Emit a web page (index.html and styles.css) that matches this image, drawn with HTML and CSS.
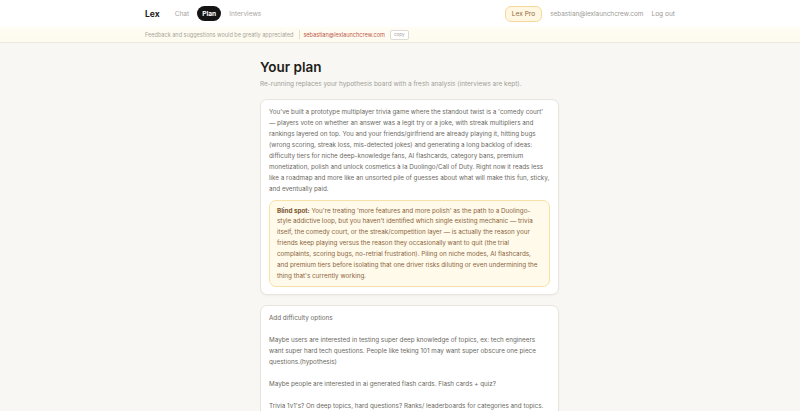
FILE: index.html
```html
<!DOCTYPE html>
<html>
<head>
<meta charset="utf-8">
<link rel="stylesheet" href="styles.css">
</head>
<body>
<header class="topbar">
  <div class="wrap topbar-inner">
    <nav class="nav">
      <span class="logo">Lex</span>
      <span class="nav-link">Chat</span>
      <span class="nav-link active">Plan</span>
      <span class="nav-link">Interviews</span>
    </nav>
    <div class="account">
      <span class="pro">Lex Pro</span>
      <span class="acct-email">sebastian@lexlaunchcrew.com</span>
      <span class="logout">Log out</span>
    </div>
  </div>
</header>
<div class="feedback">
  <div class="wrap feedback-inner">
    <span class="fb-text">Feedback and suggestions would be greatly appreciated</span>
    <span class="fb-sep"></span>
    <span class="fb-email">sebastian@lexlaunchcrew.com</span>
    <span class="fb-copy">copy</span>
  </div>
</div>
<main class="main">
  <div class="column">
    <h1 class="title">Your plan</h1>
    <p class="subtitle">Re-running replaces your hypothesis board with a fresh analysis (interviews are kept).</p>
    <section class="card">
      <p class="summary">You've built a prototype multiplayer trivia game where the standout twist is a 'comedy court' — players vote on whether an answer was a legit try or a joke, with streak multipliers and rankings layered on top. You and your friends/girlfriend are already playing it, hitting bugs (wrong scoring, streak loss, mis-detected jokes) and generating a long backlog of ideas: difficulty tiers for niche deep-knowledge fans, AI flashcards, category bans, premium monetization, polish and unlock cosmetics à la Duolingo/Call of Duty. Right now it reads less like a roadmap and more like an unsorted pile of guesses about what will make this fun, sticky, and eventually paid.</p>
      <div class="blind">
        <strong>Blind spot:</strong> You're treating 'more features and more polish' as the path to a Duolingo-style addictive loop, but you haven't identified which single existing mechanic — trivia itself, the comedy court, or the streak/competition layer — is actually the reason your friends keep playing versus the reason they occasionally want to quit (the trial complaints, scoring bugs, no-retrial frustration). Piling on niche modes, AI flashcards, and premium tiers before isolating that one driver risks diluting or even undermining the thing that's currently working.
      </div>
    </section>
    <section class="card notes">
      <p>Add difficulty options</p>
      <p>Maybe users are interested in testing super deep knowledge of topics, ex: tech engineers want super hard tech questions. People like teking 101 may want super obscure one piece questions.(hypothesis)</p>
      <p>Maybe people are interested in ai generated flash cards. Flash cards + quiz?</p>
      <p>Trivia 1v1's? On deep topics, hard questions? Ranks/ leaderboards for categories and topics.</p>
    </section>
  </div>
</main>
</body>
</html>
```
FILE: styles.css
```css
* { box-sizing: border-box; }
html, body { margin: 0; padding: 0; }
body {
  font-family: Inter, "Noto Sans", sans-serif;
  background: #f8f7f3;
  color: #3b3a37;
  height: 411px;
  overflow: hidden;
}
.wrap {
  width: 530px;
  margin: 0 auto;
  position: relative;
  left: 10px;
}
.topbar {
  background: #ffffff;
  height: 27px;
}
.topbar-inner {
  height: 27px;
  display: flex;
  align-items: center;
  justify-content: space-between;
}
.nav { display: flex; align-items: center; }
.logo {
  font-weight: 700;
  font-size: 8.5px;
  color: #1c1b19;
  margin-right: 15px;
}
.nav-link {
  font-size: 6.6px;
  color: #a9a6a0;
  margin-right: 8px;
}
.nav-link.active {
  background: #141414;
  color: #fff;
  font-weight: 700;
  border-radius: 8px;
  height: 15px;
  padding: 0 5px;
  display: inline-flex;
  align-items: center;
}
.account { display: flex; align-items: center; }
.pro {
  font-size: 6.6px;
  color: #8f6c40;
  background: #fff7e2;
  border: 1px solid #f5d99c;
  border-radius: 6px;
  height: 16px;
  padding: 0 6px;
  display: inline-flex;
  align-items: center;
  margin-right: 8px;
}
.acct-email { font-size: 6.4px; color: #9d9a94; margin-right: 8px; }
.logout { font-size: 6.6px; color: #9d9a94; margin-right: 0; }
.feedback {
  background: linear-gradient(#fffdf4, #fdfbee);
  border-bottom: 1px solid #ebe8df;
  height: 16px;
}
.feedback-inner {
  height: 15px;
  display: flex;
  align-items: center;
}
.fb-text { font-size: 5.55px; color: #a9a59c; }
.fb-sep {
  width: 1px;
  height: 9px;
  background: #e3dfd5;
  margin: 0 3px 0 6px;
}
.fb-email { font-size: 5.6px; color: #c0584b; margin-right: 5px; }
.fb-copy {
  font-size: 4.6px;
  color: #a8a5a0;
  border: 1px solid #dedbd5;
  background: #fff;
  border-radius: 2px;
  height: 10px;
  padding: 0 3px;
  display: inline-flex;
  align-items: center;
}
.main { padding-top: 16px; }
.column {
  width: 300px;
  margin: 0 auto;
  position: relative;
  left: 10px;
}
.title {
  margin: 0;
  font-size: 13.5px;
  font-weight: 600;
  color: #1d1c1a;
  line-height: 16px;
}
.subtitle {
  margin: 4px 0 0;
  font-size: 6.45px;
  color: #a19e97;
  line-height: 10px;
}
.card {
  background: #fff;
  border: 1px solid #e8e5de;
  border-radius: 7px;
  box-shadow: 0 1px 2px rgba(0,0,0,0.04);
  padding: 7px 8px 7px;
  font-size: 6.3px;
  line-height: 11px;
  color: #6b6862;
  width: 299px;
}
.column .card:first-of-type { margin-top: 10px; }
.summary { margin: 0; }
.blind {
  margin-top: 5px;
  background: #fffaea;
  border: 1px solid #f6e1a6;
  border-radius: 7px;
  padding: 4.5px 7px;
  line-height: 10.9px;
  color: #8b6440;
}
.blind strong { color: #7a5430; font-weight: 700; }
.notes { margin-top: 10px; }
.notes p { margin: 0 0 11px; }
```
